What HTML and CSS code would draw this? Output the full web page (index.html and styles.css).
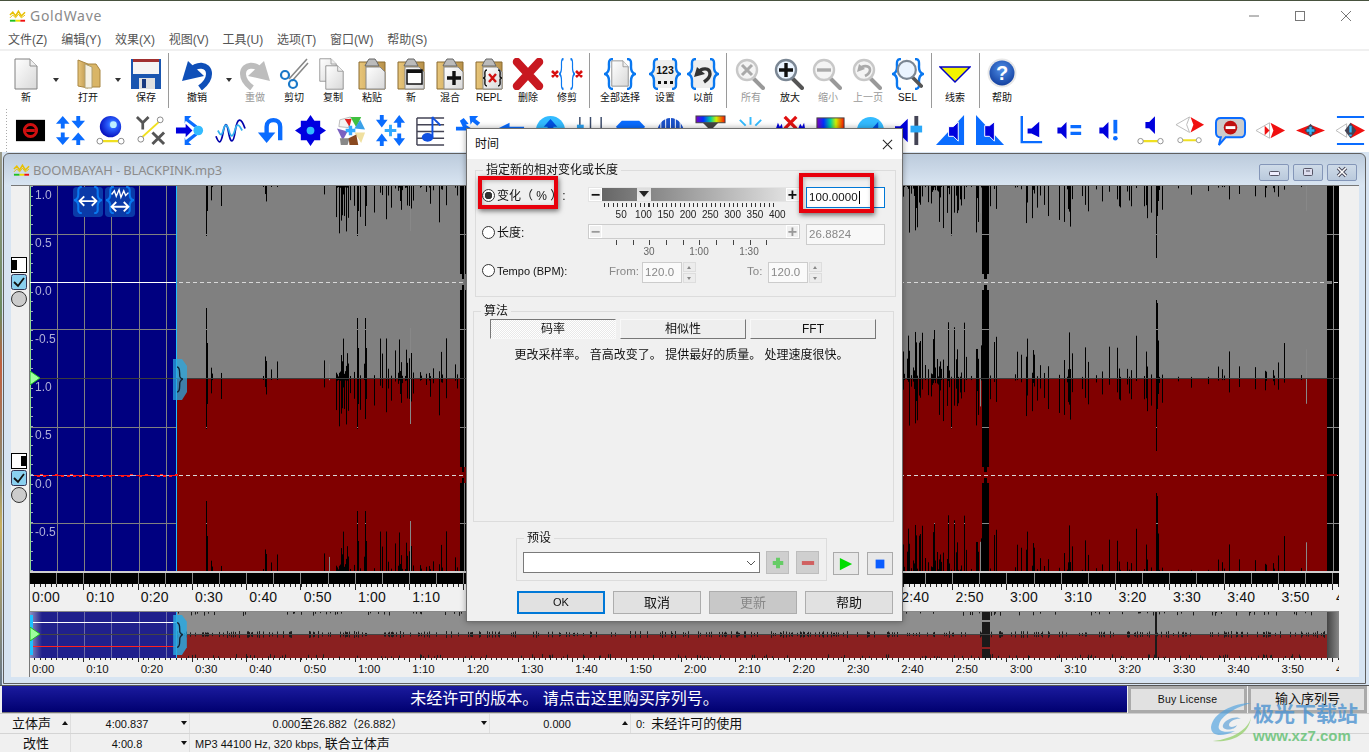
FILE: index.html
```html
<!DOCTYPE html>
<html lang="zh">
<head>
<meta charset="utf-8">
<title>GoldWave</title>
<link rel="stylesheet" href="styles.css">
</head>
<body>
<svg class="defs" aria-hidden="true">
  <defs>
    <linearGradient id="paper" x1="0" y1="0" x2="1" y2="1"><stop offset="0" stop-color="#fff"/><stop offset="1" stop-color="#d8d8d8"/></linearGradient>
    <linearGradient id="tan" x1="0" y1="0" x2="1" y2="0"><stop offset="0" stop-color="#e8c67a"/><stop offset="1" stop-color="#b8914a"/></linearGradient>
    <radialGradient id="orb" cx=".6" cy=".4" r=".7"><stop offset="0" stop-color="#6fd0ff"/><stop offset=".3" stop-color="#2a60ff"/><stop offset="1" stop-color="#0000b0"/></radialGradient>
    <radialGradient id="helpball" cx=".5" cy=".35" r=".7"><stop offset="0" stop-color="#4f8fe8"/><stop offset="1" stop-color="#0f3a9a"/></radialGradient>
    <linearGradient id="spectrum" x1="0" y1="0" x2="1" y2="0"><stop offset="0" stop-color="#8000c0"/><stop offset=".25" stop-color="#0030ff"/><stop offset=".5" stop-color="#00d0a0"/><stop offset=".7" stop-color="#d0f000"/><stop offset="1" stop-color="#ff1000"/></linearGradient>
    <symbol id="page" viewBox="0 0 24 32" preserveAspectRatio="none"><path d="M1 1H16L23 8V31H1Z" fill="url(#paper)" stroke="#808080"/><path d="M16 1V8H23" fill="#eee" stroke="#909090"/></symbol>
    <symbol id="clip" viewBox="0 0 28 32"><path d="M1 4H27V31H1Z" fill="url(#tan)" stroke="#8a6a30"/><path d="M9 4 11 1H17L19 4 21 8H7Z" fill="#bbb" stroke="#666"/><path d="M8 9H22L27 14V31H8Z" fill="url(#paper)" stroke="#888"/></symbol>
    <symbol id="braces" viewBox="0 0 32 32" preserveAspectRatio="none"><path d="M9 1C4 1 5 5 5 9 5 13 4 15 1 16 4 17 5 19 5 23 5 27 4 31 9 31M23 1C28 1 27 5 27 9 27 13 28 15 31 16 28 17 27 19 27 23 27 27 28 31 23 31" fill="none" stroke="#0a78f0" stroke-width="2.4"/></symbol>
    <symbol id="mag" viewBox="0 0 30 32"><path d="M18 20 28 30" stroke="#999" stroke-width="4" stroke-linecap="round"/><circle cx="12" cy="12" r="10" fill="#f4f4f4" stroke="#c8c8c8" stroke-width="2.4"/></symbol>
    <symbol id="magon" viewBox="0 0 30 32"><path d="M18 20 28 30" stroke="#555" stroke-width="4" stroke-linecap="round"/><circle cx="12" cy="12" r="10" fill="#eaf4ff" stroke="#7b8794" stroke-width="2.4"/></symbol>
    <symbol id="undoarrow" viewBox="0 0 32 32"><path d="M10 13C14 6 28 5 28 16 28 23 23 27 19 30" fill="none" stroke="#0f4fb8" stroke-width="6"/><path d="M1 23 7 3 23 18Z" fill="#0f4fb8"/></symbol>
    <symbol id="spk" viewBox="0 0 16 32"><path d="M0 11H6L15 2V30L6 21H0Z" fill="#0000dd"/></symbol>
    <symbol id="link" viewBox="0 0 30 8"><path d="M4 4H26" stroke="#f0e020" stroke-width="2.5"/><circle cx="4" cy="4" r="3" fill="#fff" stroke="#888"/><circle cx="26" cy="4" r="3" fill="#fff" stroke="#888"/></symbol>
    <symbol id="nosign" viewBox="0 0 20 20"><circle cx="10" cy="10" r="7" fill="none" stroke="#d01010" stroke-width="3.4"/><path d="M5 10H15" stroke="#d01010" stroke-width="3.4"/></symbol>
  </defs>
</svg>

<div class="app">
  <header class="titlebar">
    <svg class="app-logo" viewBox="0 0 18 14"><path d="M1 6 4 3 7 7 10 2 13 7 17 3" fill="none" stroke="#e8c000" stroke-width="1.6"/><path d="M1 9 4 6 7 9 10 5 13 9 17 6" fill="none" stroke="#e8c000" stroke-width="1"/><rect x="1" y="11" width="6" height="2" fill="#20c020"/><rect x="7" y="11" width="5" height="2" fill="#f0e000"/><rect x="12" y="11" width="5" height="2" fill="#f01010"/></svg>
    <span class="app-name">GoldWave</span>
    <div class="winctl">
      <svg viewBox="0 0 46 30"><path d="M18 15H28" stroke="#777"/></svg>
      <svg viewBox="0 0 46 30"><rect x="18.500" y="10.500" width="9" height="9" fill="none" stroke="#777"/></svg>
      <svg viewBox="0 0 46 30"><path d="M18 10 28 20M28 10 18 20" stroke="#777"/></svg>
    </div>
  </header>

  <nav class="menubar">
    <span>文件(Z)</span><span>编辑(Y)</span><span>效果(X)</span><span>视图(V)</span><span>工具(U)</span><span>选项(T)</span><span>窗口(W)</span><span>帮助(S)</span>
  </nav>

  <div class="toolbar-main">
    <div class="tool"><svg class="ic"><use href="#page" x="4" width="24" height="32"/></svg><span>新</span></div>
    <div class="tool-arrow"></div>
    <div class="tool"><svg class="ic" viewBox="0 0 32 32"><path d="M6 2 16 6V30L6 28Z" fill="url(#tan)" stroke="#a88540"/><path d="M16 6H24L28 12V29H16Z" fill="#d9b566" stroke="#a88540"/><path d="M13 6 20 9V30H13Z" fill="#f4f0e4" stroke="#b0a070"/></svg><span>打开</span></div>
    <div class="tool-arrow"></div>
    <div class="tool"><svg class="ic" viewBox="0 0 32 32"><rect x="1" y="1" width="30" height="30" fill="#1a56b0"/><rect x="3" y="1" width="26" height="15" fill="#f4f4f4"/><rect x="3" y="1" width="26" height="3" fill="#a03030"/><rect x="9" y="20" width="16" height="11" fill="#e0e0e0"/><rect x="12" y="21" width="4" height="9" fill="#1a3a80"/></svg><span>保存</span></div>
    <div class="tool-sep"></div>
    <div class="tool"><svg class="ic"><use href="#undoarrow" width="32" height="32"/></svg><span>撤销</span></div>
    <div class="tool-arrow"></div>
    <div class="tool off"><svg class="ic" viewBox="0 0 32 32"><g transform="matrix(-1 0 0 1 32 0)"><path d="M10 13C14 6 28 5 28 16 28 23 23 27 19 30" fill="none" stroke="#bdbdbd" stroke-width="6"/><path d="M1 23 7 3 23 18Z" fill="#bdbdbd"/></g></svg><span>重做</span></div>
    <div class="tool"><svg class="ic" viewBox="0 0 32 32"><path d="M11 21 29 1M14 23 30 5" stroke="#888" stroke-width="1.6"/><circle cx="7" cy="17" r="4" fill="none" stroke="#1a78c8" stroke-width="2.2"/><circle cx="15" cy="26" r="4" fill="none" stroke="#1a78c8" stroke-width="2.2"/></svg><span>剪切</span></div>
    <div class="tool"><svg class="ic"><use href="#page" x="2" y="0" width="18" height="24"/><use href="#page" x="8" y="7" width="19" height="25"/></svg><span>复制</span></div>
    <div class="tool"><svg class="ic"><use href="#clip" x="2" width="28" height="32"/></svg><span>粘贴</span></div>
    <div class="tool"><svg class="ic" viewBox="0 0 32 32"><use href="#clip" x="2" width="28" height="32"/><rect x="12" y="12" width="15" height="14" fill="#fff" stroke="#111" stroke-width="1.5"/><rect x="12" y="12" width="15" height="3" fill="#111"/></svg><span>新</span></div>
    <div class="tool"><svg class="ic" viewBox="0 0 32 32"><use href="#clip" x="2" width="28" height="32"/><path d="M13 20H27M20 13V27" stroke="#111" stroke-width="3.4"/></svg><span>混合</span></div>
    <div class="tool"><svg class="ic" viewBox="0 0 32 32"><use href="#clip" x="2" width="28" height="32"/><path d="M14 12C11 12 12 16 12 18 12 19 11 20 10 20 11 20 12 21 12 22 12 24 11 28 14 28M25 12C28 12 27 16 27 18 27 19 28 20 29 20 28 20 27 21 27 22 27 24 28 28 25 28" fill="none" stroke="#111" stroke-width="1.4"/><path d="M16 16 23 24M23 16 16 24" stroke="#d01010" stroke-width="2.4"/></svg><span>REPL</span></div>
    <div class="tool"><svg class="ic" viewBox="0 0 32 32"><path d="M5 4 27 28M27 4 5 28" stroke="#c81820" stroke-width="8.500" stroke-linecap="round"/></svg><span>删除</span></div>
    <div class="tool"><svg class="ic" viewBox="0 0 32 32"><use href="#braces" x="8" width="16" height="32"/><path d="M1 13 7 19M7 13 1 19M25 13 31 19M31 13 25 19" stroke="#d81010" stroke-width="2.6"/></svg><span>修剪</span></div>
    <div class="tool-sep"></div>
    <div class="tool"><svg class="ic"><use href="#braces" width="32" height="32"/><use href="#page" x="7" y="2" width="18" height="27"/></svg><span>全部选择</span></div>
    <div class="tool"><svg class="ic" viewBox="0 0 32 32"><rect x="4" y="2" width="24" height="28" fill="#eee"/><use href="#braces" width="32" height="32"/><text x="16" y="16" class="ic-num">123</text><path d="M9 23h3v3h-3zM15 23h3v3h-3zM21 23h3v3h-3z" fill="#111"/></svg><span>设置</span></div>
    <div class="tool"><svg class="ic" viewBox="0 0 32 32"><rect x="4" y="2" width="24" height="28" fill="#eee"/><use href="#braces" width="32" height="32"/><path d="M12 14C14 10 23 9 23 16 23 20 20 22 17 24" fill="none" stroke="#333" stroke-width="3.4"/><path d="M7 19 10 9 18 16Z" fill="#333"/></svg><span>以前</span></div>
    <div class="tool-sep"></div>
    <div class="tool off"><svg class="ic" viewBox="0 0 32 32"><use href="#mag" width="30" height="32"/><path d="M7 7 17 17M17 7 7 17" stroke="#aaa" stroke-width="3"/></svg><span>所有</span></div>
    <div class="tool"><svg class="ic" viewBox="0 0 32 32"><use href="#magon" width="30" height="32"/><path d="M5 12H19M12 5V19" stroke="#111" stroke-width="3.4"/></svg><span>放大</span></div>
    <div class="tool off"><svg class="ic" viewBox="0 0 32 32"><use href="#mag" width="30" height="32"/><path d="M5 12H19" stroke="#aaa" stroke-width="3.4"/></svg><span>缩小</span></div>
    <div class="tool off"><svg class="ic" viewBox="0 0 32 32"><use href="#mag" width="30" height="32"/><path d="M8 11C10 7 18 7 18 12 18 15 15 17 13 18" fill="none" stroke="#aaa" stroke-width="2.6"/><path d="M5 14 7 6 13 11Z" fill="#aaa"/></svg><span>上一页</span></div>
    <div class="tool"><svg class="ic" viewBox="0 0 32 32"><use href="#braces" width="32" height="32"/><use href="#magon" x="4" y="1" width="27" height="29"/></svg><span>SEL</span></div>
    <div class="tool-sep"></div>
    <div class="tool"><svg class="ic" viewBox="0 0 32 32"><path d="M1 9H31L16 24Z" fill="#f2f200" stroke="#0000c8" stroke-width="1.5"/></svg><span>线索</span></div>
    <div class="tool-sep"></div>
    <div class="tool"><svg class="ic" viewBox="0 0 32 32"><circle cx="16" cy="15" r="14.500" fill="#e8e8e8"/><circle cx="16" cy="15" r="12.500" fill="url(#helpball)"/><text x="16" y="22" class="ic-help">?</text></svg><span>帮助</span></div>
  </div>

  <div class="toolbar-effects">
    <svg class="fx" viewBox="0 0 32 32"><rect x="1" y="5" width="30" height="22"/><use href="#nosign" x="7" y="7" width="18" height="18"/></svg>
    <svg class="fx" viewBox="0 0 32 32" fill="#0a6cff"><path d="M8 1 15 9H10V14H6V9H1ZM24 14 31 6H26V1H22V6H17ZM8 31 15 23H10V18H6V23H1ZM24 18 31 26H26V31H22V26H17Z"/></svg>
    <svg class="fx" viewBox="0 0 32 32"><circle cx="16" cy="12" r="11" fill="url(#orb)"/><circle cx="19" cy="10" r="3.500" fill="#bfefff"/><use href="#link" x="1" y="23" width="30" height="8"/></svg>
    <svg class="fx" viewBox="0 0 32 32"><path d="M2 2 8 8 14 2M8 8V15" fill="none" stroke="#555" stroke-width="2.8"/><path d="M18 18 30 30M30 18 18 30" stroke="#555" stroke-width="3"/><path d="M5 25 27 5" stroke="#f0e020" stroke-width="2"/><circle cx="6" cy="25" r="3" fill="#fff" stroke="#888"/><circle cx="26" cy="5" r="3" fill="#fff" stroke="#888"/></svg>
    <svg class="fx" viewBox="0 0 32 32"><path d="M10 1H17L14 4 23 11 20 13 11 6 10 9ZM10 31H17L14 28 23 21 20 19 11 26 10 23Z" fill="#0a6cff"/><path d="M1 13H11V9L18 16 11 23V19H1Z" fill="#0000dd"/><circle cx="24" cy="16" r="5" fill="#33bbff"/></svg>
    <svg class="fx" viewBox="0 0 32 32" fill="none"><path d="M1 22C4 30 6 30 8 20 10 8 12 6 14 18 16 30 19 30 21 16 23 2 27 2 31 14" stroke="#0000aa" stroke-width="1.800"/><path d="M3 16C6 22 7 22 9 14 11 8 13 10 15 18 17 24 19 22 21 14 23 8 25 10 28 16" stroke="#33b0ee" stroke-width="1.800"/></svg>
    <svg class="fx" viewBox="0 0 32 32"><path d="M12 24V12C12 3 26 3 26 12V26" fill="none" stroke="#0a6cff" stroke-width="4.500"/><path d="M3 18H21L12 29Z" fill="#0a6cff"/></svg>
    <svg class="fx" viewBox="0 0 32 32"><path d="M16 0 20 6H26V12L32 16 26 20V26H20L16 32 12 26H6V20L0 16 6 12V6H12Z" fill="#0000e0"/><circle cx="16" cy="16" r="4" fill="#33bbff"/></svg>
    <svg class="fx" viewBox="0 0 32 32"><path d="M5 5 16 2 14 13 4 12Z" fill="#f4f4f4" stroke="#bbb"/><path d="M16 2H27L22 13Z" fill="#40c040"/><path d="M10 4H17L15 12Z" fill="#e02020"/><path d="M26 5 31 15 20 14Z" fill="#3aa0e8"/><path d="M2 14 13 17 8 26Z" fill="#7a60c0"/><path d="M5 24H15L13 31H6Z" fill="#888"/><path d="M20 18 31 18 27 29Z" fill="#f0e0a0"/><path d="M14 24 22 20 24 31 15 31Z" fill="#8a4a20"/><path d="M11 16H21M16 11V21" stroke="#33aaff" stroke-width="3.500"/></svg>
    <svg class="fx" viewBox="0 0 32 32" fill="#0a6cff"><path d="M7 13 13 5H9V0H5V5H1ZM25 0 31 8H27V13H23V8H19ZM7 19 1 27H5V32H9V27H13ZM25 32 31 24H27V19H23V24H19Z"/><path d="M10 16H22M16 10V22" stroke="#33aaff" stroke-width="3"/></svg>
    <svg class="fx" viewBox="0 0 32 32"><path d="M2 3V31M2 3H30M2 10H30M2 17H30M2 24H30M2 31H30" stroke="#445" stroke-width="1.500" fill="none"/><ellipse cx="13" cy="23" rx="6" ry="4.500" fill="#1050e0"/><path d="M18 23V2C20 6 24 7 26 11" fill="none" stroke="#1050e0" stroke-width="2"/></svg>
    <svg class="fx" viewBox="0 0 32 32"><path d="M9 3 14 9 11 10 17 14 13 16H1V12H8L5 6ZM15 1H24L21 4 26 8 23 11 18 7 16 10Z" fill="#0a6cff"/></svg>
    <svg class="fx" viewBox="0 0 32 32"><path d="M3 14 15 8V12H30V24H3Z" fill="#0a6cff"/></svg>
    <svg class="fx" viewBox="0 0 32 32"><circle cx="16" cy="16" r="15" fill="#33bbff"/><path d="M16 4 23 12H19V18H13V12H9Z" fill="#0050e0"/></svg>
    <svg class="fx" viewBox="0 0 32 32"><path d="M5 2V30M16 2V30M27 2V30" stroke="#3a4a6a" stroke-width="1.500"/><rect x="2" y="10" width="7" height="5" fill="#2aa0f0"/></svg>
    <svg class="fx" viewBox="0 0 32 32"><path d="M7 6H25L31 12 25 20H7L1 12Z" fill="#0a6cff"/></svg>
    <svg class="fx" viewBox="0 0 32 32"><path d="M1 24C1 -4 31 -4 31 24Z" fill="#1a50c8"/><path d="M6 2V24M11 1V24M16 0V24M21 1V24M26 2V24" stroke="#fff"/></svg>
    <svg class="fx" viewBox="0 0 32 32"><rect x="1" y="1" width="30" height="7" fill="url(#spectrum)" stroke="#444"/><path d="M8 8H24L16 16Z" fill="#444"/></svg>
    <svg class="fx" viewBox="0 0 32 32"><path d="M16 2V10M5 5 11 11M27 5 21 11M2 16H10M30 16H22" stroke="#33bbff" stroke-width="2"/></svg>
    <svg class="fx" viewBox="0 0 32 32"><path d="M10 2 22 14M22 2 10 14" stroke="#e01010" stroke-width="3.400"/><path d="M1 14 3 8 5 12 7 9 8 14ZM24 14 26 9 28 12 30 8 31 14Z" fill="#0000dd"/></svg>
    <svg class="fx" viewBox="0 0 32 32"><rect x="2" y="3" width="28" height="11" fill="url(#spectrum)" stroke="#444"/></svg>
    <svg class="fx" viewBox="0 0 32 32"><circle cx="16" cy="16" r="14" fill="#33bbff"/><path d="M8 18H14L24 7V28Z" fill="#0050e0"/></svg>
    <svg class="fx" viewBox="0 0 32 32"><use href="#spk" x="0" y="2" width="14" height="28"/><rect x="20" y="1" width="4" height="30" fill="#445"/><rect x="16" y="11" width="12" height="7" fill="#2aa8f8"/></svg>
    <svg class="fx" viewBox="0 0 32 32"><path d="M30 0V31H1Z" fill="#0a6cff"/><path d="M14 12H19L24 7V27L19 22H14Z" fill="#0000dd" stroke="#fff"/></svg>
    <svg class="fx" viewBox="0 0 32 32"><path d="M1 0V31H30Z" fill="#0a6cff"/><path d="M10 11H15L20 7V27L15 22H10Z" fill="#0000dd" stroke="#fff"/></svg>
    <svg class="fx" viewBox="0 0 32 32"><path d="M7 1V28H28" fill="none" stroke="#0a6cff" stroke-width="2.500"/><path d="M13 14H17L25 7V23L17 19H13Z" fill="#0000dd"/></svg>
    <svg class="fx" viewBox="0 0 32 32"><use href="#spk" x="2" y="6" width="11" height="20"/><path d="M16 12H27M16 19H27" stroke="#0a6cff" stroke-width="3.400"/></svg>
    <svg class="fx" viewBox="0 0 32 32"><use href="#spk" x="4" y="6" width="11" height="20"/><path d="M21 5V19" stroke="#0a6cff" stroke-width="4"/><circle cx="21" cy="24" r="2.400" fill="#0a6cff"/></svg>
    <svg class="fx" viewBox="0 0 32 32"><use href="#spk" x="10" y="0" width="12" height="21"/><use href="#link" x="2" y="23" width="28" height="8"/></svg>
    <svg class="fx" viewBox="0 0 32 32"><path d="M1 10 15 2 12 10 15 18Z" fill="#fff" stroke="#bbb"/><path d="M16 2 30 10 16 18 19 10Z" fill="#f01010"/><use href="#link" x="2" y="22" width="26" height="8"/></svg>
    <svg class="fx" viewBox="0 0 32 32"><path d="M6 3H26C29 3 31 5 31 8V18C31 21 29 23 26 23H11L4 31 6 23C3 23 1 21 1 18V8C1 5 3 3 6 3Z" fill="#ccc" stroke="#0a6cff" stroke-width="2"/><circle cx="16" cy="13" r="7" fill="#c01010"/><path d="M11 13H21" stroke="#fff" stroke-width="3"/></svg>
    <svg class="fx" viewBox="0 0 32 32"><path d="M1 16 15 8 15 24Z" fill="#fff" stroke="#bbb"/><path d="M16 8 31 16 16 24 19 16Z" fill="#f01010"/><path d="M10 11 15 16 10 21Z" fill="#f01010"/></svg>
    <svg class="fx" viewBox="0 0 32 32"><path d="M1 16 16 10 31 16 16 22Z" fill="#f01010"/><path d="M16 9 22 16 16 23 10 16Z" fill="#445"/><path d="M12 16H20M16 12V20" stroke="#33bbff" stroke-width="2.400"/></svg>
    <svg class="fx" viewBox="0 0 32 32"><path d="M2 2H30M2 30H30" stroke="#0a6cff" stroke-width="2"/><path d="M1 16 12 9V23Z" fill="#fff" stroke="#bbb"/><path d="M16 8 31 16 16 24Z" fill="#f01010"/><path d="M16 8 22 16 16 24 10 16Z" fill="#445"/><path d="M16 11V18M16 20V22" stroke="#33bbff" stroke-width="2.400"/></svg>
  </div>

  <main class="mdi">
    <section class="child">
      <div class="child-title">
        <svg class="child-logo" viewBox="0 0 18 14"><path d="M1 6 4 3 7 7 10 2 13 7 17 3" fill="none" stroke="#e8c000" stroke-width="1.600"/><path d="M1 9 4 6 7 9 10 5 13 9 17 6" fill="none" stroke="#e8c000"/><rect x="1" y="11" width="6" height="2" fill="#20c020"/><rect x="7" y="11" width="5" height="2" fill="#f0e000"/><rect x="12" y="11" width="5" height="2" fill="#f01010"/></svg>
        <span class="child-name">BOOMBAYAH - BLACKPINK.mp3</span>
        <div class="child-ctl">
          <div class="cbtn"><svg viewBox="0 0 28 15"><rect x="9.500" y="6.500" width="10" height="4" rx="1" fill="#eef" stroke="#556"/></svg></div>
          <div class="cbtn"><svg viewBox="0 0 28 15"><rect x="9.500" y="3.500" width="9" height="7" rx="1" fill="#dde" stroke="#556"/><path d="M12 6H16" stroke="#556"/></svg></div>
          <div class="cbtn"><svg viewBox="0 0 28 15"><path d="M10 3 18 11M18 3 10 11" stroke="#445" stroke-width="3.400"/><path d="M10 3 18 11M18 3 10 11" stroke="#fff" stroke-width="1.600"/></svg></div>
        </div>
      </div>
      <div class="child-body">
        <aside class="side">
          <div class="side-group">
            <svg class="side-ic" viewBox="0 0 16 16"><rect x=".5" y=".5" width="15" height="15" fill="#fff" stroke="#000"/><rect x="1" y="3" width="5" height="10"/></svg>
            <svg class="side-ic" viewBox="0 0 16 16"><rect x=".5" y=".5" width="15" height="15" rx="2" fill="#8ad0f0" stroke="#335"/><path d="M3 8 7 12 13 4" fill="none" stroke="#111" stroke-width="1.800"/></svg>
            <svg class="side-ic" viewBox="0 0 16 16"><circle cx="8" cy="8" r="7.500" fill="#ccc" stroke="#333"/></svg>
          </div>
          <div class="side-group second">
            <svg class="side-ic" viewBox="0 0 16 16"><rect x=".5" y=".5" width="15" height="15" fill="#fff" stroke="#000"/><rect x="10" y="3" width="5" height="10"/></svg>
            <svg class="side-ic" viewBox="0 0 16 16"><rect x=".5" y=".5" width="15" height="15" rx="2" fill="#8ad0f0" stroke="#335"/><path d="M3 8 7 12 13 4" fill="none" stroke="#111" stroke-width="1.800"/></svg>
            <svg class="side-ic" viewBox="0 0 16 16"><circle cx="8" cy="8" r="7.500" fill="#ccc" stroke="#333"/></svg>
          </div>
        </aside>
        <div class="tracks">
          <div class="wave-stack">
            <canvas id="wave" width="1309" height="387"></canvas>
            <div class="axis">
              <span>1.0</span><span>0.5</span><span>0.0</span><span>-0.5</span>
              <span>1.0</span><span>0.5</span><span>0.0</span><span>-0.5</span>
            </div>
            <div class="float-tools">
              <svg viewBox="0 0 32 32"><rect x="0" y="0" width="32" height="32" rx="4" fill="#0a3aa8"/><use href="#braces" x="1" y="-1" width="30" height="30"/><path d="M7 15H25M12 10 7 15 12 20M20 10 25 15 20 20" fill="none" stroke="#fff" stroke-width="2"/></svg>
              <svg viewBox="0 0 32 32"><rect x="0" y="0" width="32" height="32" rx="4" fill="#0a3aa8"/><use href="#braces" x="1" y="-1" width="30" height="30"/><path d="M7 8 10 4 12 10 15 3 17 11 20 4 22 9 25 6" fill="none" stroke="#fff" stroke-width="1.500"/><path d="M7 21H25M12 16 7 21 12 26M20 16 25 21 20 26" fill="none" stroke="#fff" stroke-width="2"/></svg>
            </div>
            <svg class="handle" viewBox="0 0 15 41"><path d="M0 0H9L14 7V33L9 41H0Z" fill="#2aa8e0" fill-opacity=".75"/><path d="M4 8C8 8 6 16 7 18 8 20 9 20 10 20 9 20 8 21 7 23 6 26 8 33 4 33" fill="none" stroke="#123" stroke-width="1.400"/></svg>
            <svg class="start-mark" viewBox="0 0 10 14"><path d="M0 0 10 7 0 14Z" fill="#9dff9d" stroke="#20c020"/></svg>
          </div>
          <div class="ruler-strip"></div>
          <div class="ruler-ticks"></div>
          <div class="ruler-labels big">
            <span>0:00</span><span>0:10</span><span>0:20</span><span>0:30</span><span>0:40</span><span>0:50</span><span>1:00</span><span>1:10</span><span>1:20</span><span>1:30</span><span>1:40</span><span>1:50</span><span>2:00</span><span>2:10</span><span>2:20</span><span>2:30</span><span>2:40</span><span>2:50</span><span>3:00</span><span>3:10</span><span>3:20</span><span>3:30</span><span>3:40</span><span>3:50</span><span>4:00</span>
          </div>
          <div class="wave-stack over">
            <canvas id="overview" width="1309" height="46"></canvas>
            <svg class="handle small" viewBox="0 0 15 41"><path d="M0 0H9L14 7V33L9 41H0Z" fill="#2aa8e0" fill-opacity=".85"/><path d="M4 8C8 8 6 16 7 18 8 20 9 20 10 20 9 20 8 21 7 23 6 26 8 33 4 33" fill="none" stroke="#123" stroke-width="1.400"/></svg>
            <svg class="start-mark small" viewBox="0 0 10 14"><path d="M0 0 10 7 0 14Z" fill="#9dff9d" stroke="#20c020"/></svg>
          </div>
          <div class="ruler-ticks thin"></div>
          <div class="ruler-labels">
            <span>0:00</span><span>0:10</span><span>0:20</span><span>0:30</span><span>0:40</span><span>0:50</span><span>1:00</span><span>1:10</span><span>1:20</span><span>1:30</span><span>1:40</span><span>1:50</span><span>2:00</span><span>2:10</span><span>2:20</span><span>2:30</span><span>2:40</span><span>2:50</span><span>3:00</span><span>3:10</span><span>3:20</span><span>3:30</span><span>3:40</span><span>3:50</span><span>4:00</span>
          </div>
        </div>
      </div>
    </section>
  </main>

  <div class="banner">
    <div class="banner-msg">未经许可的版本。 请点击这里购买序列号。</div>
    <div class="banner-btn buy">Buy License</div>
    <div class="banner-btn">输入序列号</div>
  </div>

  <footer class="status">
    <div class="st-row">
      <div class="st c1"><b>立体声</b><i class="up"></i></div>
      <div class="st c2"><span>4:00.837</span><i class="dn"></i></div>
      <div class="st c3"><span>0.000<b>至</b>26.882（26.882）</span><i class="dn"></i></div>
      <div class="st c4"><span>0.000</span><i class="up"></i></div>
      <div class="st c5"><span>0:&nbsp;&nbsp;<b>未经许可的使用</b></span></div>
    </div>
    <div class="st-row">
      <div class="st c1 mid"><b>改性</b></div>
      <div class="st c2"><span>4:00.8</span><i class="dn"></i></div>
      <div class="st c6"><span>MP3 44100 Hz, 320 kbps, <b>联合立体声</b></span></div>
    </div>
  </footer>
</div>

<div class="dialog">
  <div class="dlg-title"><span>时间</span><svg viewBox="0 0 12 12"><path d="M1 1 11 11M11 1 1 11" stroke="#222" stroke-width="1.100"/></svg></div>
  <div class="dlg-body">
    <fieldset class="grp g-change">
      <legend>指定新的相对变化或长度</legend>
      <div class="change-grid">
        <label class="radio-row"><i class="radio on"></i><span class="zh">变化（ % ）:</span></label>
        <div class="slide-col">
          <div class="slider">
            <i class="sl-btn">−</i>
            <div class="sl-track"><i class="thumb"></i></div>
            <i class="sl-btn">+</i>
          </div>
          <div class="ticks a"></div>
          <div class="scale a"><span>50</span><span>100</span><span>150</span><span>200</span><span>250</span><span>300</span><span>350</span><span>400</span></div>
        </div>
        <div class="txt active">100.0000<i class="caret"></i></div>

        <label class="radio-row"><i class="radio"></i><span class="zh">长度:</span></label>
        <div class="slide-col">
          <div class="slider dis">
            <i class="sl-btn">−</i>
            <div class="sl-track"></div>
            <i class="sl-btn">+</i>
          </div>
          <div class="ticks b"></div>
          <div class="scale b"><span>30</span><span>1:00</span><span>1:30</span></div>
        </div>
        <div class="txt dim">26.8824</div>

        <label class="radio-row tempo-label"><i class="radio"></i><span>Tempo (BPM):</span></label>
        <div class="tempo">
          <span class="t-from">From:</span><div class="txt dim small">120.0</div><div class="spin"><i class="s-up"></i><i class="s-dn"></i></div>
          <span class="t-to">To:</span><div class="txt dim small">120.0</div><div class="spin"><i class="s-up"></i><i class="s-dn"></i></div>
        </div>
      </div>
    </fieldset>

    <fieldset class="grp g-algo">
      <legend>算法</legend>
      <div class="algo-btns"><div class="algo sel">码率</div><div class="algo">相似性</div><div class="algo">FFT</div></div>
      <p class="algo-note">更改采样率。 音高改变了。 提供最好的质量。 处理速度很快。</p>
    </fieldset>

    <div class="preset-row">
      <fieldset class="grp g-preset">
        <legend>预设</legend>
        <div class="preset-inner">
          <div class="combo"><svg viewBox="0 0 10 6"><path d="M1 1 5 5 9 1" fill="none" stroke="#555"/></svg></div>
          <div class="pbtn"><svg viewBox="0 0 16 16"><path d="M2 8H14M8 2V14" stroke="#66cc66" stroke-width="4.500"/></svg></div>
          <div class="pbtn"><svg viewBox="0 0 16 16"><path d="M1 8H15" stroke="#d06060" stroke-width="4.500"/></svg></div>
        </div>
      </fieldset>
      <div class="transport">
        <div class="pbtn play"><svg viewBox="0 0 16 16"><path d="M1 1 15 8 1 15Z" fill="#00dd00"/></svg></div>
        <div class="pbtn play"><svg viewBox="0 0 16 16"><rect x="3" y="3" width="10" height="10" fill="#0a5cff"/></svg></div>
      </div>
    </div>

    <div class="dlg-actions">
      <div class="act default">OK</div><div class="act">取消</div><div class="act disabled">更新</div><div class="act">帮助</div>
    </div>
  </div>
  <div class="mark mark-a"></div>
  <div class="mark mark-b"></div>
</div>

<div class="watermark">
  <svg class="wm-logo" viewBox="0 0 44 42"><path d="M42 2C24 2 4 12 2 26 2 36 14 36 26 30 14 32 8 30 10 24 12 14 28 6 42 2Z" fill="#4aa0e0" fill-opacity=".8"/><path d="M42 16C40 28 24 38 4 40 18 42 40 36 42 16Z" fill="#8acb5a" fill-opacity=".85"/><path d="M14 24C16 18 28 14 32 18 28 17 20 20 20 24 20 27 26 26 28 24 26 30 12 30 14 24Z" fill="#5aa0d8" fill-opacity=".85"/></svg>
  <div class="wm-text"><div class="wm-zh">极光下载站</div><div class="wm-url">www.xz7.com</div></div>
</div>
<script src="wave.js"></script>
</body>
</html>
```
FILE: styles.css
```css
* { box-sizing: border-box; }
html, body { margin: 0; padding: 0; width: 1369px; height: 752px; overflow: hidden; }
body { position: relative; background: #fff; font: 12px/14px "Liberation Sans", "Noto Sans CJK SC", sans-serif; color: #111; }
i { font-style: normal; display: block; }
b { font-weight: normal; }
.defs { position: absolute; width: 0; height: 0; }

.app { width: 1369px; height: 752px; display: flex; flex-direction: column; border-top: 1px solid #47523e; background: #fff; }

.titlebar { height: 29px; flex: none; display: flex; align-items: center; padding-left: 9px; background: #fff; }
.app-logo { width: 17px; height: 14px; flex: none; }
.app-name { margin-left: 4px; font: 14px/16px "Noto Sans", sans-serif; letter-spacing: .7px; color: #8a8a8a; }
.winctl { margin-left: auto; display: flex; }
.winctl svg { width: 46px; height: 30px; display: block; }

.menubar { height: 19px; flex: none; display: flex; gap: 13.800px; padding-left: 8px; align-items: center; font: 12px/16px "Liberation Sans", "Noto Sans CJK SC", sans-serif; color: #555; background: #fff; }

.toolbar-main { height: 59px; flex: none; border-top: 2px solid #f0f0f0; padding: 2px 0 0 7px; display: grid; grid-template-rows: 55px; grid-template-columns: 38px 22px 42px 18px 38px 6px 52px 12px 40px 38px 40px 38px 40px 38px 40px 38px 40px 4px 58px 32px 44px 2px 48px 30px 46px 34px 45px 2px 46px 2px 44px; background: #fff; }
.tool { display: flex; flex-direction: column; align-items: center; font: 10px/12px "Liberation Sans", "Noto Sans CJK SC", sans-serif; color: #111; min-width: 0; white-space: nowrap; }
.tool.off { color: #999; }
.ic { width: 32px; height: 32px; margin-top: 5px; flex: none; display: block; }
.tool span { margin-top: 2px; }
.ic-num { font: bold 10.500px "Liberation Sans", sans-serif; text-anchor: middle; fill: #111; }
.ic-help { font: bold 20px "Liberation Sans", sans-serif; text-anchor: middle; fill: #fff; }
.tool-arrow { position: relative; }
.tool-arrow::after { content: ""; display: block; width: 0; margin: 25px auto 0; border: 3.500px solid transparent; border-top: 4px solid #333; border-bottom: 0; }
.tool-sep { width: 1px; justify-self: center; background: #9a9a9a; height: 55px; }

.toolbar-effects { height: 44px; flex: none; padding-left: 15px; display: grid; grid-template-columns: repeat(34, 40px); grid-auto-rows: 32px; align-items: center; justify-items: start; padding-top: 6px; background: #fff;
  background-image: radial-gradient(#aaa 0.7px, transparent 0.8px); background-size: 3px 3px; background-repeat: repeat-y; background-position: 5px 0; }
.fx { width: 31px; height: 31px; display: block; }

.mdi { height: 533px; flex: none; padding: 1px 3px 1px 3px; background: linear-gradient(#9a9a8a, #6a8a60 30%, #c06040 40%, #8a8a70 60%, #c8b060 70%, #667788) 0 0 / 2px 100% no-repeat, #d7e4f2; }
.child { height: 531px; border: 1px solid #606060; border-top-left-radius: 6px; border-top-right-radius: 6px; background: linear-gradient(#bccbdc 0, #d9e5f2 32px, #d7e4f2 33px); display: flex; flex-direction: column; padding: 0 6px 6px 7px; }
.child-title { height: 32px; flex: none; display: flex; align-items: center; padding-left: 2px; border-bottom: 1px solid #777; }
.child-logo { width: 17px; height: 14px; flex: none; }
.child-name { margin-left: 3px; font: 13px/16px "Noto Sans", sans-serif; letter-spacing: -.15px; color: #8c8c8c; }
.child-ctl { margin-left: auto; display: flex; gap: 4px; padding-right: 2px; padding-top: 5px; }
.cbtn { width: 30px; height: 17px; border: 1px solid #8496b8; border-radius: 2px; background: linear-gradient(#cfdbe8, #b9c9dc); }
.cbtn svg { display: block; width: 28px; height: 15px; }

.child-body { flex: 1; display: flex; background: #f0f0f0; min-height: 0; }
.side { width: 19px; flex: none; padding: 71px 0 0 0; display: flex; flex-direction: column; border-right: 1px solid #777; }
.side-group { display: flex; flex-direction: column; gap: 1px; }
.side-group.second { margin-top: 146px; }
.side-ic { width: 16px; height: 16px; display: block; }
.tracks { width: 1309px; flex: none; background: #f0f0f0; }

.wave-stack { display: grid; width: 1309px; }
.wave-stack > * { grid-area: 1 / 1; }
.wave-stack canvas { display: block; }
.axis { display: grid; grid-auto-rows: 48.100px; color: #b0b0d8; font: 12px/14px "Liberation Sans", sans-serif; padding: 2px 0 0 5px; height: 387px; }
.float-tools { display: flex; gap: 2px; margin-left: 43px; align-self: start; }
.float-tools svg { width: 30px; height: 32px; display: block; }
.handle { width: 15px; height: 41px; align-self: start; margin: 173px 0 0 143px; }
.handle.small { margin-top: 3px; height: 40px; }
.start-mark { width: 10px; height: 14px; margin-top: 185px; align-self: start; }
.start-mark.small { margin-top: 15px; }

.ruler-strip { height: 11px; background-color: #000; background-image: repeating-linear-gradient(90deg, transparent 0, transparent 26.150px, #888 26.150px, #888 27.150px); }
.ruler-ticks { height: 6px; background-image:
  repeating-linear-gradient(90deg, transparent 0, transparent 53.300px, #222 53.300px, #222 54.300px),
  repeating-linear-gradient(90deg, transparent 0, transparent 4.430px, #222 4.430px, #222 5.430px);
  background-size: 100% 6px, 100% 3px; background-repeat: no-repeat; background-position: 0 0, 0 0; }
.ruler-ticks.thin { height: 4px; background-size: 100% 4px, 100% 2px; }
.ruler-labels { display: flex; overflow: hidden; width: 1309px; padding-left: 2px; font: 11.500px/14px "Liberation Sans", sans-serif; color: #111; height: 14px; }
.ruler-labels.big { font-size: 14px; letter-spacing: .2px; line-height: 14px; height: 21px; }
.ruler-labels span { width: 54.330px; flex: none; }
.wave-stack.over { border-top: 1px solid #888; }

.banner { height: 28px; flex: none; display: flex; background: #f0f0f0; padding: 0 2px 0 2px; border-top: 1px solid #555; }
.banner-msg { flex: 1; background: linear-gradient(#1b1b9e, #000070); color: #fff; text-align: center; font: 16px/26px "Liberation Sans", "Noto Sans CJK SC", sans-serif; border-bottom: 1px solid #777; }
.banner-btn { width: 119px; margin-left: 1px; border: 3px solid #aaa; background: #e1e1e1; text-align: center; font: 13px/20px "Liberation Sans", "Noto Sans CJK SC", sans-serif; }
.banner-btn.buy { font-size: 10.500px; letter-spacing: .2px; }

.status { flex: 1; background: #f0f0f0; border-top: 1px solid #cfcfcf; font: 11px/18px "Liberation Sans", "Noto Sans CJK SC", sans-serif; color: #111; }
.st-row { height: 20px; display: flex; border-bottom: 1px solid #d4d4d4; }
.st { display: flex; align-items: center; justify-content: center; position: relative; border-right: 1px solid #dedede; height: 19px; }
.st b { font-size: 13px; }
.st i { position: absolute; right: 2px; top: 7px; border: 3.500px solid transparent; }
.st i.up { border-top: 0; border-bottom: 4px solid #111; }
.st i.dn { border-bottom: 0; border-top: 4px solid #111; }
.c1 { width: 71px; justify-content: flex-start; padding-left: 12px; }
.c1.mid { padding-left: 23px; }
.c2 { width: 119px; padding-right: 6px; }
.c3 { width: 300px; padding-right: 4px; }
.c4 { width: 141px; padding-right: 6px; }
.c5 { flex: 1; justify-content: flex-start; padding-left: 5px; border-right: 0; }
.c6 { flex: 1; justify-content: flex-start; padding-left: 5px; border-right: 0; }

.dialog { position: absolute; left: 466px; top: 128px; width: 437px; height: 494px; border: 1px solid #6f6f6f; background: #f0f0f0; box-shadow: 0 0 6px rgba(0,0,0,.35); font: 12px/14px "Liberation Sans", "Noto Sans CJK SC", sans-serif; color: #111; }
.dlg-title { height: 30px; background: #fff; display: flex; align-items: center; justify-content: space-between; padding: 0 9px 0 8px; font-size: 12px; }
.dlg-title svg { width: 11px; height: 11px; display: block; }
.dlg-body { padding: 3px 8px 0 6px; }
.grp { margin: 0; padding: 0; border: 1px solid #dcdcdc; min-width: 0; }
.grp legend { padding: 0 3px; line-height: 16px; height: 16px; font-size: 12px; }
.g-change { margin-left: 2px; width: 421px; height: 135px; padding: 9px 0 0 6px; }
.g-change legend { margin-left: 1px; }
.change-grid { display: grid; grid-template-columns: 106px 212px 79px; column-gap: 0; grid-template-rows: 37px 38px 22px; }
.radio-row { display: flex; align-items: flex-start; gap: 2px; padding-top: 2px; line-height: 14px; font-size: 11.500px; white-space: nowrap; }
.radio-row .zh { font-size: 12px; }
.tempo-label { font-size: 11px; }
.radio { width: 13px; height: 13px; border: 1px solid #333; border-radius: 50%; background: #fff; flex: none; }
.radio.on { background: radial-gradient(circle, #333 0, #333 3.500px, #fff 4px); }
.slide-col { min-width: 0; }
.slider { height: 15px; display: flex; border: 1px solid #e4e4e4; background: #f0f0f0; }
.sl-btn { width: 13px; flex: none; font-size: 16px; line-height: 12px; text-align: center; color: #111; background: #f0f0f0; border: 1px solid #fff; font-weight: bold; }
.sl-track { flex: 1; background: linear-gradient(90deg, #666, #e0e0e0); }
.thumb { width: 14px; height: 13px; margin-left: 35px; background: linear-gradient(#ddd, #eee); position: relative; }
.thumb::after { content: ""; position: absolute; left: 2px; top: 3px; border: 5px solid transparent; border-top: 6px solid #222; border-bottom: 0; }
.slider.dis .sl-track { background: #f0f0f0; }
.slider.dis { border-color: #ccc; }
.slider.dis .sl-btn { color: #999; }
.ticks { height: 4px; margin-top: 1px; margin-left: 16px; margin-right: 23px; }
.ticks.a { background-image: repeating-linear-gradient(90deg, #333 0, #333 1px, transparent 1px, transparent 4.450px); }
.ticks.b { margin-left: 28px; height: 5px; background-image: repeating-linear-gradient(90deg, #444 0, #444 1px, transparent 1px, transparent 16.700px); }
.scale { display: flex; font-size: 10px; line-height: 12px; color: #222; margin-top: 2px; text-align: center; }
.scale.a { margin-left: 22px; }
.scale.a span { width: 22.300px; flex: none; }
.scale.b { margin-left: 36px; color: #666; margin-top: 1px; }
.scale.b span { width: 50px; flex: none; }
.txt { height: 21px; border: 1px solid #ccc; background: #fff; font-size: 11.500px; line-height: 19px; padding-left: 2px; letter-spacing: .1px; }
.txt.active { border-color: #0078d7; display: flex; margin-left: 6px; width: 79px; }
.txt.dim { color: #888; background: #f8f8f8; margin-left: 6px; width: 79px; }
.txt.dim.small { width: 40px; margin: 0; flex: none; background: #fafafa; height: 21px; }
.caret { width: 1px; height: 13px; background: #000; margin: 3px 0 0 1px; }
.tempo { grid-column: 2 / 4; display: flex; align-items: flex-start; color: #888; font-size: 11.500px; }
.t-from { margin-left: 21px; width: 33px; line-height: 19px; }
.t-to { margin-left: 51px; width: 21px; line-height: 19px; }
.spin { width: 13px; margin-left: 1px; flex: none; display: flex; flex-direction: column; gap: 1px; }
.s-up, .s-dn { height: 10px; background: #ececec; border: 1px solid #ddd; position: relative; }
.s-up::after, .s-dn::after { content: ""; position: absolute; left: 3px; top: 3px; border: 2.500px solid transparent; }
.s-up::after { border-top: 0; border-bottom: 3px solid #888; }
.s-dn::after { border-bottom: 0; border-top: 3px solid #888; }

.g-algo { margin: 6px 0 0 0; width: 421px; height: 219px; }
.g-algo legend { margin-left: 7px; }
.algo-btns { display: flex; gap: 4px; margin-left: 16px; }
.algo { width: 126px; height: 20px; text-align: center; font-size: 12px; line-height: 18px; background: #eee; border: 1px solid; border-color: #f8f8f8 #777 #777 #f8f8f8; }
.algo.sel { border-color: #777 #f8f8f8 #f8f8f8 #777; background: conic-gradient(#fff 25%, #e9e9e9 0 50%, #fff 0 75%, #e9e9e9 0) 0 0 / 2px 2px; }
.algo-note { margin: 9px 4px 0 0; text-align: center; font-size: 12px; line-height: 14px; }

.preset-row { display: flex; margin: 8px 0 0 43px; gap: 6px; }
.g-preset { width: 311px; height: 51px; padding: 5px 0 0 6px; }
.g-preset legend { margin-left: 1px; }
.preset-inner { display: flex; gap: 7px; align-items: center; }
.combo { width: 237px; height: 21px; background: #fff; border: 1px solid #7a7a7a; display: flex; align-items: center; justify-content: flex-end; padding-right: 3px; margin-right: -1px; }
.combo svg { width: 10px; height: 6px; display: block; }
.pbtn { width: 23px; height: 23px; background: #cfcfcf; border: 1px solid #bdbdbd; display: flex; align-items: center; justify-content: center; }
.pbtn svg { width: 14px; height: 14px; display: block; }
.transport { display: flex; gap: 8px; align-self: flex-end; margin-bottom: 6px; }
.pbtn.play { width: 26px; background: #e8e8e8; border-color: #aaa; }
.dlg-actions { display: flex; gap: 8px; margin: 10px 0 0 44px; }
.act { width: 88px; height: 23px; background: #e1e1e1; border: 1px solid #adadad; text-align: center; font-size: 13px; line-height: 21px; }
.act.default { border: 2px solid #0078d7; font-size: 11px; line-height: 19px; }
.act.disabled { background: #c8c8c8; color: #888; }

.mark { position: absolute; border: 4px solid #e8000c; box-shadow: 1px 2px 5px rgba(0,0,0,.55), inset 1px 1px 4px rgba(0,0,0,.25); pointer-events: none; }
.mark-a { left: 11px; top: 47px; width: 80px; height: 33px; }
.mark-b { left: 332px; top: 44px; width: 75px; height: 40px; }

.watermark { position: absolute; left: 1209px; top: 700px; display: flex; gap: 0; opacity: .8; }
.wm-logo { width: 44px; height: 44px; flex: none; }
.wm-text { margin-top: -1px; }
.wm-zh { font: bold 21px/26px "Noto Sans CJK SC", sans-serif; color: #4d93d0; }
.wm-url { font: bold 15px/22px "Liberation Sans", sans-serif; color: #5fbf70; }
```
FILE: wave.js
```js
(function () {
  var seed = 20240;
  function rnd() { seed = (seed * 1664525 + 1013904223) >>> 0; return seed / 4294967296; }

  var SEL = 146;            // selection ends at canvas x=146 (screen x=176)
  var END = 1297;           // wave ends (screen 1327)
  var BANDS = [[430, 436], [952, 959]];
  // density and max spike depth per region of the track
  var ZONES = [
    [146, 305, 0.08, 30], [305, 322, 0.75, 55], [322, 350, 0.1, 30], [350, 430, 0.45, 42],
    [436, 700, 0.25, 30], [700, 870, 0.3, 45], [870, 952, 0.55, 50],
    [959, 1120, 0.22, 42], [1120, 1297, 0.1, 35]
  ];

  function depths() {
    var d = [];
    for (var x = 0; x < 1309; x++) {
      var a = 0, b = 0;
      ZONES.forEach(function (z) {
        if (x >= z[0] && x < z[1] && rnd() < z[2]) {
          var r = rnd(); r = r * r;
          a = 1 + r * z[3];
          b = 1 + rnd() * rnd() * z[3] * 1.2;
        }
      });
      d.push([a, b]);
    }
    [[176, 50, 70], [1126, 72, 78], [1127, 30, 75], [335, 40, 60], [327, 50, 60], [380, 45, 50]].forEach(function (s) {
      d[s[0]] = [s[1], s[2]];
      d[s[0] + 1] = [s[1] * 0.5, s[2] * 0.5];
    });
    return d;
  }

  function gridV(c, top, h) {
    c.fillStyle = "#888";
    for (var x = 27.15; x < 1309; x += 27.15) c.fillRect(Math.round(x), top, 1, h);
  }

  function drawMain() {
    var c = document.getElementById("wave").getContext("2d");
    var H = 387, d = depths();
    c.fillStyle = "#000"; c.fillRect(0, 0, 1309, H);
    gridV(c, 0, H);
    c.fillStyle = "#888";
    [48, 143, 241, 337].forEach(function (y) { c.fillRect(0, y, 1309, 1); });

    function channel(top, bot, color, scale) {
      c.fillStyle = color;
      for (var x = SEL; x < END; x++) {
        var inBand = BANDS.some(function (b) { return x >= b[0] && x < b[1]; });
        if (inBand) continue;
        c.fillRect(x, top + d[x][0] * scale, 1, bot - top - d[x][0] * scale - d[x][1] * scale);
      }
      BANDS.forEach(function (b) {
        var mid = (top + bot) / 2;
        c.fillRect(b[0], mid - 3, b[1] - b[0], 6);
        c.fillRect(b[0], mid - 8, 2, 16);
        c.fillRect(b[1] - 2, mid - 8, 2, 16);
      });
    }
    channel(0, 192, "#808080", 1);
    channel(193, 385, "#800000", 1);

    // selected part
    c.fillStyle = "#000080"; c.fillRect(0, 0, SEL, H - 2);
    gridV2(c);
    c.fillStyle = "#1ec0ff"; c.fillRect(SEL, 0, 1, H - 2);

    // channel separator and base
    c.fillStyle = "#3c3c3c"; c.fillRect(0, 192, 1309, 1);
    c.fillStyle = "#cfcfcf"; c.fillRect(0, 385, 1309, 2);

    // centre lines
    [96, 289].forEach(function (y, i) {
      c.fillStyle = "#d8d8d8";
      for (var x = SEL + 3; x < 1309; x += 7) c.fillRect(x, y, 4, 1);
      if (i === 0) { c.fillStyle = "#fff"; c.fillRect(0, y, SEL, 1); }
      else {
        c.fillStyle = "#c0c0e0"; c.fillRect(0, y, SEL, 1);
        for (var n = 4; n < SEL; n += 3) {
          if (n % 17 > 2) { c.fillStyle = "#ff1818"; c.fillRect(n, y - (n % 5 === 0 ? 1 : 0), 3, (n % 2) + 1); }
        }
      }
    });
    c.fillStyle = "#808080"; c.fillRect(END, 95, 5, 3);
    c.fillStyle = "#800000"; c.fillRect(END, 288, 10, 2);
  }

  function gridV2(c) {
    c.fillStyle = "#808080";
    [27, 54, 81, 109, 136].forEach(function (x) { c.fillRect(x, 0, 1, 385); });
    [48, 143, 241, 337].forEach(function (y) { c.fillRect(0, y, SEL, 1); });
    c.fillStyle = "#8fe08f"; c.fillRect(0, 0, 1, 385);
    for (var y = 0; y < 385; y += 9.6) { c.fillStyle = "#a0a0c8"; c.fillRect(1, Math.round(y), 2, 1); }
  }

  function drawOver() {
    var c = document.getElementById("overview").getContext("2d");
    var W = 1309, H = 46;
    c.fillStyle = "#1a1a1a"; c.fillRect(0, 0, W, H);
    for (var x = 0; x < 1297; x++) {
      var a = rnd() < 0.12 ? 1 + rnd() * 3 : 0, b = rnd() < 0.12 ? 1 + rnd() * 3 : 0;
      var m = rnd() < 0.25 ? 1 + rnd() * 2 : 0;
      c.fillStyle = "#8e8e8e"; c.fillRect(x, a, 1, 22 - a - m);
      c.fillStyle = "#8a2020"; c.fillRect(x, 23 + m, 1, 23 - m - b);
    }
    c.fillStyle = "#1a1a1a";
    c.fillRect(952, 0, 8, 46); c.fillStyle = "#8e8e8e"; c.fillRect(952, 8, 8, 2); c.fillStyle = "#8a2020"; c.fillRect(952, 35, 8, 2);
    c.fillStyle = "#1a1a1a"; c.fillRect(1125, 0, 2, 46);
    c.fillStyle = "#444"; c.fillRect(0, 22, W, 1);
    var g = c.createLinearGradient(1297, 0, 1309, 0); g.addColorStop(0, "#444"); g.addColorStop(1, "#888");
    c.fillStyle = g; c.fillRect(1297, 0, 12, H);
    c.fillStyle = "#20208c"; c.fillRect(0, 0, 146, H);
    var s = c.createLinearGradient(0, 0, 12, 0); s.addColorStop(0, "#9090c0"); s.addColorStop(1, "#20208c");
    c.fillStyle = s; c.fillRect(0, 0, 12, H);
    c.fillStyle = "#6a6aa8";
    [27, 54, 81, 109, 136].forEach(function (x) { c.fillRect(x, 0, 1, H); });
    c.fillStyle = "#444"; c.fillRect(0, 22, 146, 1);
    c.fillStyle = "#fff"; c.fillRect(2, 10, 144, 1);
    c.fillStyle = "#ff2020"; c.fillRect(2, 34, 144, 1);
    c.fillStyle = "#1ec0ff"; c.fillRect(146, 0, 1, H); c.fillRect(0, 3, 3, 40);
  }

  drawMain();
  drawOver();
})();
```
